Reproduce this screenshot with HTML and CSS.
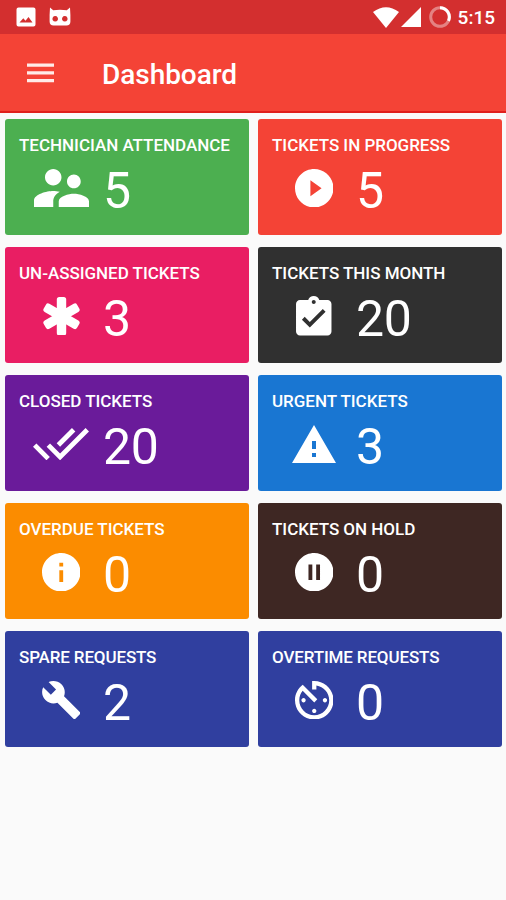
FILE: index.html
```html
<!DOCTYPE html>
<html lang="en">
<head>
<meta charset="utf-8">
<title>Dashboard</title>
<link rel="stylesheet" href="styles.css">
</head>
<body>
<div class="status">
  <div class="status-group notifications">
    <svg width="20" height="20" viewBox="0 0 20 20"><path fill="#fff" fill-rule="evenodd" d="M2.500 0.500h15a2 2 0 0 1 2 2v15a2 2 0 0 1-2 2h-15a2 2 0 0 1-2-2v-15a2 2 0 0 1 2-2zM3.500 15.500h13l-4-5.500-3 3.800-2.200-2.600z"/></svg>
    <svg width="22" height="20" viewBox="0 0 22 20"><path fill="#fff" fill-rule="evenodd" d="M1 .5 4.200 3.200Q11 2.200 17.800 3.200L21 .5 21.400 8V14.500q0 4-4 4H4.600q-4 0-4-4V8zM6.200 9a2.800 2.800 0 1 0 .01 0zM15.800 9a2.800 2.800 0 1 0 .01 0z"/></svg>
  </div>
  <div class="status-group system">
    <svg width="26" height="21" viewBox="0 0 26 21"><path fill="#fff" d="M0 5Q13-4.500 26 5L13 21z"/></svg>
    <svg width="20" height="20" viewBox="0 0 20 20"><path fill="#fff" d="M20 0v20H0z"/></svg>
    <svg class="battery" width="22" height="22" viewBox="0 0 22 22" fill="none" stroke="#fff" stroke-width="3"><circle cx="11" cy="11" r="9.300" opacity=".4"/><path d="M11 1.700A9.300 9.300 0 0 1 19.500 14.800"/></svg>
    <span class="clock">5:15</span>
  </div>
</div>
<header class="appbar">
  <svg width="27" height="20" viewBox="0 0 27 20"><path fill="#ffebe8" d="M0 .5h27v3.300H0zM0 8.200h27v3.300H0zM0 15.900h27v3.300H0z"/></svg>
  <h1 class="title">Dashboard</h1>
</header>
<main class="grid">
  <section class="card green"><h2 class="label">TECHNICIAN ATTENDANCE</h2><div class="row"><span class="icon"><svg width="55" height="38.500" viewBox="2 5 20 14"><path d="M16.500 12c1.380 0 2.490-1.120 2.490-2.500S17.880 7 16.500 7C15.120 7 14 8.120 14 9.500s1.120 2.500 2.500 2.500zM9 11c1.660 0 2.990-1.340 2.990-3S10.660 5 9 5C7.340 5 6 6.340 6 8s1.340 3 3 3zm7.500 3c-1.830 0-5.500.92-5.500 2.750V19h11v-2.250c0-1.830-3.670-2.750-5.500-2.750zM9 13c-2.330 0-7 1.170-7 3.500V19h7v-2.250c0-.85.33-2.340 2.370-3.470C10.500 13.100 9.660 13 9 13z"/></svg></span><span class="value">5</span></div></section>
  <section class="card red"><h2 class="label">TICKETS IN PROGRESS</h2><div class="row"><span class="icon"><svg width="38.500" height="38.500" viewBox="2 2 20 20"><path d="M12 2C6.480 2 2 6.480 2 12s4.480 10 10 10 10-4.480 10-10S17.520 2 12 2zm-2 14.200v-8.400l5.800 4.200-5.800 4.200z"/></svg></span><span class="value">5</span></div></section>
  <section class="card pink"><h2 class="label">UN-ASSIGNED TICKETS</h2><div class="row"><span class="icon"><svg width="37" height="38.500" viewBox="0 0 37 38.500"><g fill="#fff"><rect x="13.800" y="0" width="9.400" height="38.500" rx="2.500"/><rect x="13.800" y="0" width="9.400" height="38.500" rx="2.500" transform="rotate(60 18.500 19.250)"/><rect x="13.800" y="0" width="9.400" height="38.500" rx="2.500" transform="rotate(-60 18.500 19.250)"/></g></svg></span><span class="value">3</span></div></section>
  <section class="card dark"><h2 class="label">TICKETS THIS MONTH</h2><div class="row"><span class="icon"><svg width="35.500" height="39.400" viewBox="3 1 18 20"><path d="M19 3h-4.180C14.400 1.840 13.300 1 12 1c-1.300 0-2.400.84-2.820 2H5c-1.100 0-2 .9-2 2v14c0 1.100.9 2 2 2h14c1.100 0 2-.9 2-2V5c0-1.100-.9-2-2-2zm-7 0c.55 0 1 .45 1 1s-.45 1-1 1-1-.45-1-1 .45-1 1-1zm-2 14l-4-4 1.410-1.410L10 14.170l6.590-6.590L18 9l-8 8z"/></svg></span><span class="value">20</span></div></section>
  <section class="card purple"><h2 class="label">CLOSED TICKETS</h2><div class="row"><span class="icon"><svg width="56" height="32.300" viewBox=".41 5.590 23.250 13.410"><path d="M18 7l-1.410-1.410-6.340 6.340 1.410 1.410L18 7zm4.240-1.410L11.660 16.170 7.480 12l-1.410 1.410L11.660 19l12-12-1.420-1.410zM.41 13.410L6 19l1.410-1.410L1.830 12 .41 13.410z"/></svg></span><span class="value">20</span></div></section>
  <section class="card blue"><h2 class="label">URGENT TICKETS</h2><div class="row"><span class="icon"><svg width="44" height="38" viewBox="1 2 22 19"><path d="M1 21h22L12 2 1 21zm12-3h-2v-2h2v2zm0-4h-2v-4h2v4z"/></svg></span><span class="value">3</span></div></section>
  <section class="card orange"><h2 class="label">OVERDUE TICKETS</h2><div class="row"><span class="icon"><svg width="38.500" height="38.500" viewBox="2 2 20 20"><path d="M12 2C6.480 2 2 6.480 2 12s4.480 10 10 10 10-4.480 10-10S17.520 2 12 2zm1 15h-2v-6h2v6zm0-8h-2V7h2v2z"/></svg></span><span class="value">0</span></div></section>
  <section class="card brown"><h2 class="label">TICKETS ON HOLD</h2><div class="row"><span class="icon"><svg width="38.500" height="38.500" viewBox="2 2 20 20"><path d="M12 2C6.480 2 2 6.480 2 12s4.480 10 10 10 10-4.480 10-10S17.520 2 12 2zm-1 14H9V8h2v8zm4 0h-2V8h2v8z"/></svg></span><span class="value">0</span></div></section>
  <section class="card indigo"><h2 class="label tight">SPARE REQUESTS</h2><div class="row"><span class="icon"><svg width="38.500" height="38" viewBox=".9 1.100 22.200 21.900"><path d="M22.700 19l-9.100-9.100c.9-2.300.4-5-1.500-6.900-2-2-5-2.400-7.400-1.300L9 6 6 9 1.600 4.700C.4 7.100.9 10.100 2.900 12.100c1.900 1.900 4.600 2.400 6.900 1.500l9.100 9.100c.4.4 1 .4 1.400 0l2.300-2.300c.5-.4.5-1.100.1-1.400z"/></svg></span><span class="value">2</span></div></section>
  <section class="card indigo"><h2 class="label tight">OVERTIME REQUESTS</h2><div class="row"><span class="icon"><svg width="38.500" height="38.500" viewBox="3 3 18 18"><path d="M11 17c0 .55.45 1 1 1s1-.45 1-1-.45-1-1-1-1 .45-1 1zm0-14v4h2V5.080c3.390.49 6 3.390 6 6.920 0 3.870-3.130 7-7 7s-7-3.130-7-7c0-1.680.59-3.220 1.580-4.420L12 13l1.410-1.410-6.800-6.800v.02C4.420 6.450 3 9.050 3 12c0 4.970 4.020 9 9 9 4.970 0 9-4.030 9-9s-4.030-9-9-9h-1zm7 9c0-.55-.45-1-1-1s-1 .45-1 1 .45 1 1 1 1-.45 1-1zM6 12c0 .55.45 1 1 1s1-.45 1-1-.45-1-1-1-1 .45-1 1z"/></svg></span><span class="value">0</span></div></section>
</main>
</body>
</html>
```
FILE: styles.css
```css
* { box-sizing: border-box; }
body {
  margin: 0;
  min-height: 900px;
  background: #fafafa;
  color: #fff;
  font-family: Roboto, "Liberation Sans", sans-serif;
}
svg { display: block; flex: none; }
.status {
  height: 34px;
  padding: 0 11px 0 16px;
  display: flex;
  justify-content: space-between;
  background: #d32f2f;
}
.status-group { display: flex; align-items: center; }
.notifications { gap: 13px; }
.system { gap: 2px; }
.battery { margin-left: 6px; }
.clock {
  margin-left: 5px;
  font-size: 19px;
  font-weight: 500;
  line-height: 34px;
  padding-top: 2px;
}
.appbar {
  height: 79px;
  padding-left: 27px;
  display: flex;
  align-items: center;
  gap: 48px;
  background: #f44336;
  border-bottom: 2px solid #e01f1c;
}
.title {
  margin: 0;
  padding-top: 5px;
  font-size: 28px;
  font-weight: 500;
  line-height: 32px;
  letter-spacing: -0.05px;
}
.grid {
  display: grid;
  grid-template-columns: 244px 244px;
  grid-auto-rows: 116px;
  gap: 12px 9px;
  padding: 6px 4px 0 5px;
}
.card { padding: 16px 14px 0; border-radius: 3px; }
.label {
  margin: 0;
  font-size: 17px;
  font-weight: 500;
  line-height: 20px;
  letter-spacing: -0.02px;
  white-space: nowrap;
}
.tight { letter-spacing: -0.14px; }
.row { display: flex; align-items: center; height: 68px; margin-top: -1px; }
.icon {
  width: 56px;
  height: 40px;
  margin: 0 14px;
  display: flex;
  align-items: center;
  justify-content: center;
}
.icon svg { fill: #fff; }
.value { font-size: 50px; font-weight: 400; line-height: 56px; padding-top: 5px; letter-spacing: -0.4px; }
.green { background: #4caf50; }
.red { background: #f44336; }
.pink { background: #e91e63; }
.dark { background: #303030; }
.purple { background: #6a1b9a; }
.blue { background: #1976d2; }
.orange { background: #fb8c00; }
.brown { background: #3e2723; }
.indigo { background: #303f9f; }
```
